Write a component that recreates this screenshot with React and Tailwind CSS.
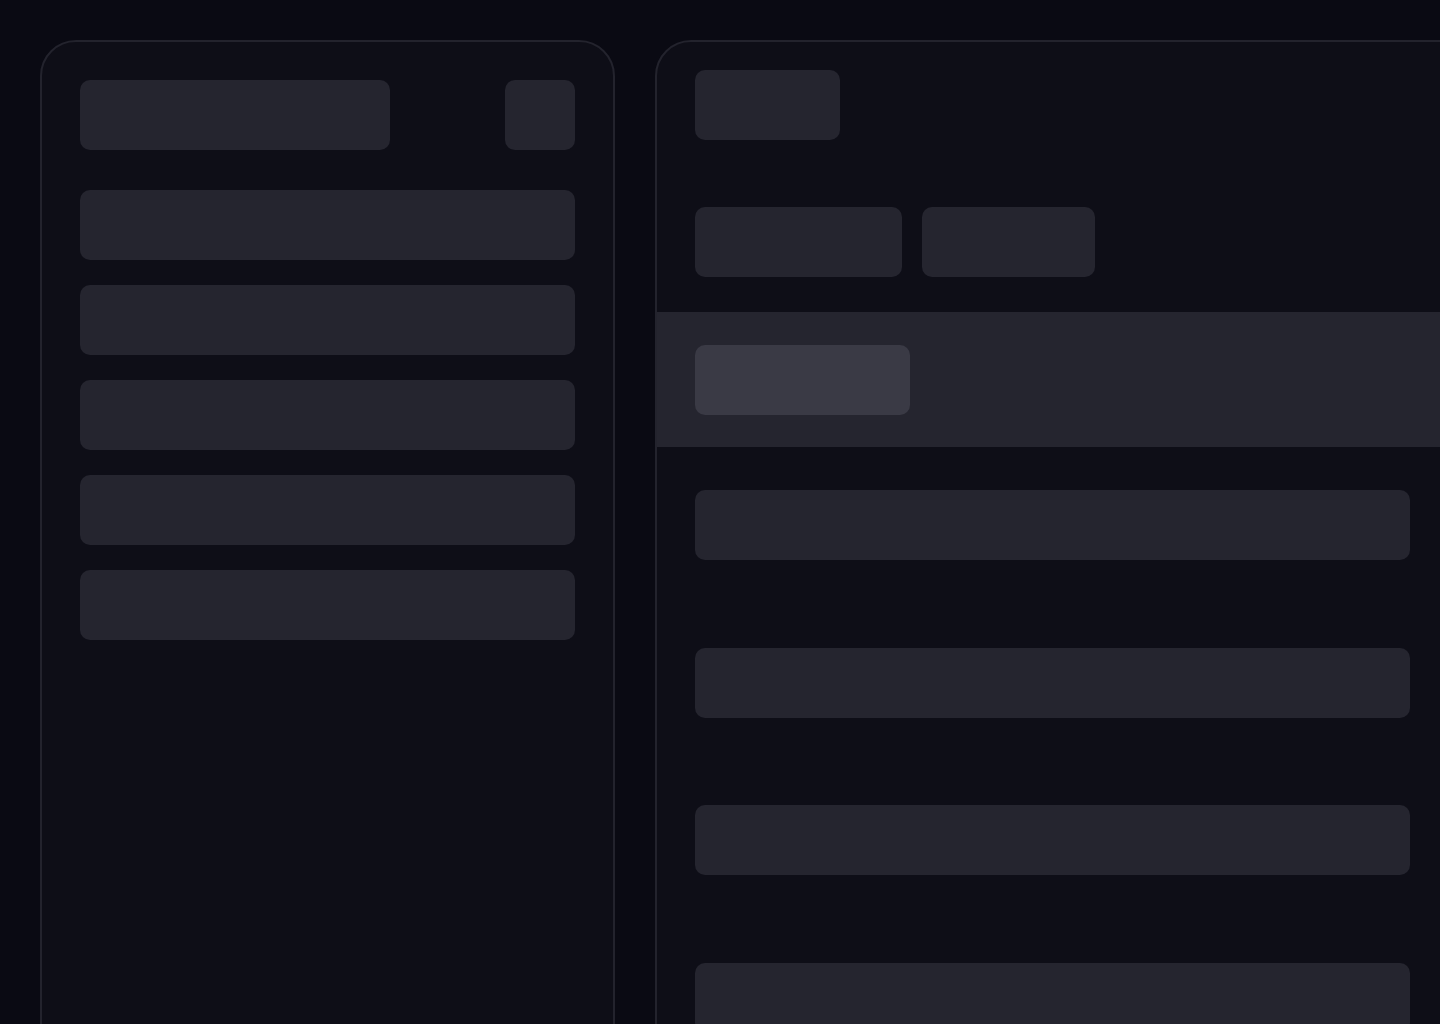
export default function App() {
    const leftRows = [0, 1, 2, 3, 4];
    const rightRows = [0, 1, 2, 3];

    return (
        <div className="min-h-screen w-full overflow-hidden bg-[#0a0a13] p-10">
            <div className="flex gap-10">
                {/* sidebar skeleton */}
                <div className="h-[1100px] w-[575px] shrink-0 rounded-[36px] border-2 border-[#23232d] bg-[#0e0e17] p-[38px]">
                    <div className="flex items-center justify-between">
                        <div className="h-[70px] w-[310px] rounded-[10px] bg-[#25252f]" />
                        <div className="h-[70px] w-[70px] rounded-[10px] bg-[#25252f]" />
                    </div>
                    <div className="mt-10 flex flex-col gap-[25px]">
                        {leftRows.map((i) => (
                            <div key={i} className="h-[70px] w-full rounded-[10px] bg-[#25252f]" />
                        ))}
                    </div>
                </div>

                {/* main skeleton */}
                <div className="h-[1100px] w-[860px] shrink-0 rounded-[36px] border-2 border-[#23232d] bg-[#0e0e17] pt-[28px]">
                    <div className="px-[38px]">
                        <div className="h-[70px] w-[145px] rounded-[10px] bg-[#25252f]" />
                        <div className="mt-[67px] flex gap-5">
                            <div className="h-[70px] w-[207px] rounded-[10px] bg-[#25252f]" />
                            <div className="h-[70px] w-[173px] rounded-[10px] bg-[#25252f]" />
                        </div>
                    </div>
                    <div className="mt-[35px] bg-[#25252f] px-[38px] pt-[33px] pb-[32px]">
                        <div className="h-[70px] w-[215px] rounded-[10px] bg-[#3a3a45]" />
                    </div>
                    <div className="mt-[43px] flex flex-col gap-[87.5px] px-[38px]">
                        {rightRows.map((i) => (
                            <div key={i} className="h-[70px] w-[715px] rounded-[10px] bg-[#25252f]" />
                        ))}
                    </div>
                </div>
            </div>
        </div>
    );
}
